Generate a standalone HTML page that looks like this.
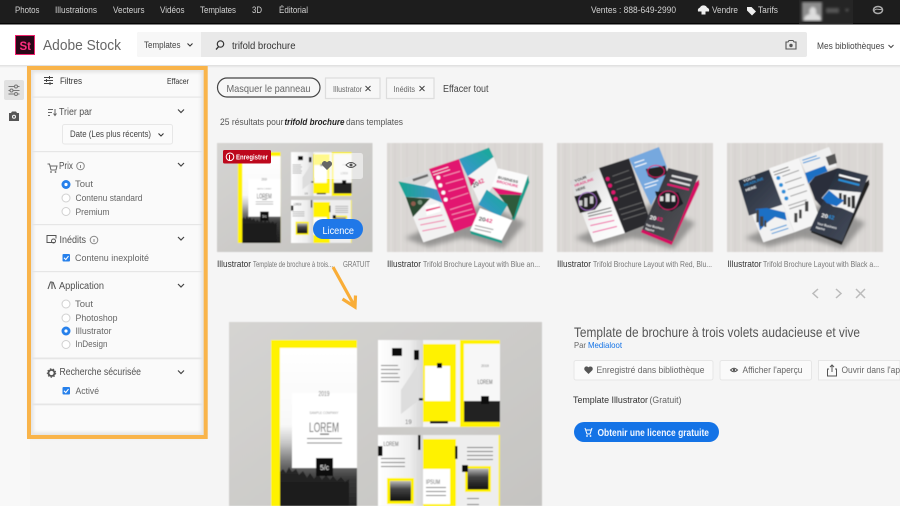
<!DOCTYPE html>
<html lang="fr"><head><meta charset="utf-8"><title>Adobe Stock</title>
<style>
html,body{margin:0;padding:0;width:900px;height:506px;background:#f5f5f5;overflow:hidden}
svg{display:block}
#root{filter:blur(.3px)}
text{font-family:"Liberation Sans",sans-serif}
</style></head><body>
<svg id="root" xmlns="http://www.w3.org/2000/svg" width="900" height="506" viewBox="0 0 900 506">
<defs>
<linearGradient id="bgg" x1="0" y1="0" x2="1" y2="1"><stop offset="0" stop-color="#d5d4d2"/><stop offset="1" stop-color="#c4c3c0"/></linearGradient>
<linearGradient id="fog" x1="0" y1="0" x2="0" y2="1"><stop offset="0" stop-color="#fff"/><stop offset=".45" stop-color="#f8f8f8"/><stop offset=".55" stop-color="#c8c8c8"/><stop offset=".66" stop-color="#777"/><stop offset=".76" stop-color="#3a3a3a"/><stop offset="1" stop-color="#1c1c1c"/></linearGradient>
<linearGradient id="fog2" x1="0" y1="0" x2="0" y2="1"><stop offset="0" stop-color="#bbb"/><stop offset=".4" stop-color="#444"/><stop offset="1" stop-color="#111"/></linearGradient>
<linearGradient id="pg" x1="0" y1="0" x2="1" y2="0"><stop offset="0" stop-color="#fff"/><stop offset=".7" stop-color="#eee"/><stop offset="1" stop-color="#d5d5d5"/></linearGradient>
<linearGradient id="tb" x1="0" y1="0" x2="1" y2="0"><stop offset="0" stop-color="#16a68f"/><stop offset="1" stop-color="#4a8fd0"/></linearGradient>
<linearGradient id="tb2" x1="0" y1="1" x2="1" y2="0"><stop offset="0" stop-color="#3c93d6"/><stop offset="1" stop-color="#17ab94"/></linearGradient>
<linearGradient id="drk" x1="0" y1="0" x2="1" y2="1"><stop offset="0" stop-color="#2f3036"/><stop offset="1" stop-color="#55565c"/></linearGradient>
<linearGradient id="nv" x1="0" y1="0" x2="1" y2="1"><stop offset="0" stop-color="#1f2735"/><stop offset="1" stop-color="#4a5160"/></linearGradient>
<linearGradient id="wh" x1="0" y1="0" x2="1" y2="1"><stop offset="0" stop-color="#d0d0d0"/><stop offset=".6" stop-color="#f6f6f6"/><stop offset="1" stop-color="#fff"/></linearGradient>
<linearGradient id="hs" x1="0" y1="0" x2="0" y2="1"><stop offset="0" stop-color="#000" stop-opacity=".1"/><stop offset="1" stop-color="#000" stop-opacity="0"/></linearGradient>
<filter id="b1" x="-5%" y="-5%" width="110%" height="110%"><feGaussianBlur stdDeviation=".4"/></filter>
<filter id="b2" x="-5%" y="-5%" width="110%" height="110%"><feGaussianBlur stdDeviation="1.2"/></filter>
<filter id="b6" x="-20%" y="-20%" width="140%" height="140%"><feGaussianBlur stdDeviation="7"/></filter>
<filter id="b3" x="-30%" y="-30%" width="160%" height="160%"><feGaussianBlur stdDeviation="1.6"/></filter>
<g id="wood">
<rect x="6" y="0" width="468" height="327" fill="#dad7d4"/>
<g stroke="#c9c5c1" stroke-width="3" opacity=".3"><path d="M30 0V327M66 0V327M98 0V327M150 0V327M186 0V327M240 0V327M282 0V327M330 0V327M372 0V327M420 0V327M452 0V327"/></g>
<g stroke="#ece9e7" stroke-width="4" opacity=".35"><path d="M18 0V327M48 0V327M120 0V327M170 0V327M210 0V327M262 0V327M305 0V327M350 0V327M398 0V327M438 0V327"/></g>
<path d="M60 285 130 312 230 285 265 290 355 318 420 240 300 180Z" fill="#555" opacity=".5" filter="url(#b6)"/>
</g>
<g id="art">
<rect width="313" height="216" fill="url(#bgg)"/>
<rect x="42" y="18" width="86" height="180" fill="#fff200"/>
<rect x="51" y="26" width="77" height="172" fill="url(#fog)"/>
<path d="M51 150l3-3 3 4 3-6 3 5 4-3 3 6 4-4 4 7 3-5 4 6 4-5 4 6 4-5 4 5 3-4 4 5 4-4 4 5 4-3V198H51Z" fill="#181818" opacity=".75"/>
<rect x="63" y="71" width="65" height="75" fill="#fff"/>
<rect x="87" y="136" width="17" height="18" fill="#0c0c0c"/>
<text x="95.5" y="148" text-anchor="middle" font-size="7" fill="#eee">5/c</text>
<text x="95" y="74" text-anchor="middle" font-size="7" fill="#777" textLength="11" lengthAdjust="spacingAndGlyphs">2019</text>
<text x="95" y="92" text-anchor="middle" font-size="3.5" fill="#999" textLength="29" lengthAdjust="spacingAndGlyphs">SAMPLE COMPANY</text>
<text x="95" y="110" text-anchor="middle" font-size="14" fill="#666" textLength="30" lengthAdjust="spacingAndGlyphs">LOREM</text>
<rect x="91" y="111.500" width="9" height="1.200" fill="#555"/>
<rect x="78" y="116" width="35" height="1" fill="#777"/><rect x="78" y="120.500" width="35" height="1" fill="#777"/>
<rect x="149" y="18" width="45" height="87" fill="url(#pg)"/>
<rect x="194" y="18" width="37" height="87" fill="#f4f4f4"/>
<rect x="194" y="22" width="33" height="78" fill="#fff200"/>
<rect x="196" y="44" width="25" height="35" fill="#fff"/>
<rect x="208" y="41" width="5" height="5" fill="#111"/>
<rect x="201" y="99" width="18" height="2.500" fill="#111"/>
<rect x="176" y="76" width="18" height="2.500" fill="#111"/>
<rect x="185" y="28" width="5" height="10" fill="#111"/>
<rect x="163" y="26" width="10" height="8" fill="#111"/>
<g fill="#777"><rect x="152" y="43" width="17" height="1"/><rect x="152" y="47" width="19" height="1"/><rect x="152" y="51" width="17" height="1"/><rect x="152" y="55" width="19" height="1"/><rect x="152" y="59" width="18" height="1"/></g>
<path d="M172 68 188 44 190 78 172 92Z" fill="#ddd"/>
<text x="176" y="102" font-size="6" fill="#666">19</text>
<rect x="231" y="18" width="40" height="87" fill="#fff200"/>
<rect x="235" y="22" width="36" height="78" fill="#f7f7f7"/>
<rect x="235" y="79" width="36" height="21" fill="#222"/>
<rect x="252" y="74" width="8" height="8" fill="#111"/>
<text x="256" y="62" text-anchor="middle" font-size="6.500" fill="#555" textLength="15" lengthAdjust="spacingAndGlyphs">LOREM</text>
<text x="256" y="45" text-anchor="middle" font-size="3.500" fill="#777">2019</text>
<rect x="149" y="113" width="122" height="85" fill="#eee"/>
<rect x="149" y="113" width="45" height="85" fill="url(#pg)"/>
<rect x="194" y="117" width="33" height="81" fill="#fff200"/>
<rect x="194" y="147" width="27" height="35" fill="#fff"/>
<rect x="226" y="124" width="2.500" height="13" fill="#111"/>
<rect x="189" y="113" width="2.500" height="15" fill="#111"/>
<rect x="149" y="124" width="4.500" height="10" fill="#111"/>
<text x="162" y="124" text-anchor="middle" font-size="6.500" fill="#555" textLength="15" lengthAdjust="spacingAndGlyphs">LOREM</text>
<text x="204" y="162" text-anchor="middle" font-size="6.500" fill="#555" textLength="14" lengthAdjust="spacingAndGlyphs">IPSUM</text>
<g fill="#777"><rect x="152" y="136" width="24" height="1"/><rect x="152" y="140" width="24" height="1"/><rect x="152" y="144" width="24" height="1"/><rect x="197" y="165" width="20" height="1"/><rect x="197" y="169" width="20" height="1"/><rect x="197" y="173" width="20" height="1"/><rect x="238" y="125" width="26" height="1"/><rect x="238" y="129" width="26" height="1"/><rect x="238" y="133" width="26" height="1"/><rect x="238" y="137" width="26" height="1"/><rect x="238" y="176" width="12" height="1"/><rect x="238" y="182" width="12" height="1"/></g>
<rect x="158" y="156" width="27" height="26" fill="#fff200"/>
<rect x="161" y="159" width="21" height="20" fill="url(#fog2)"/>
<rect x="236" y="144" width="26" height="26" fill="#fff200"/>
<rect x="238.500" y="146.500" width="21" height="21" fill="url(#fog2)"/>
<rect x="233" y="143" width="6" height="7" fill="#111"/>
<rect x="269.500" y="113" width="1.500" height="85" fill="#fff200"/>
</g>
</defs>

<!-- page -->
<rect width="900" height="506" fill="#f5f5f5"/>
<rect x="0" y="65" width="30" height="441" fill="#f8f8f8"/>
<rect x="0" y="65" width="900" height="3" fill="url(#hs)"/>

<!-- top bar -->
<rect width="900" height="24" fill="#1d1d1d"/>
<rect y="23" width="900" height="1.500" fill="#050505"/>
<g font-size="9" fill="#d2d2d2">
<text x="15" y="13" textLength="24.500" lengthAdjust="spacingAndGlyphs">Photos</text>
<text x="55" y="13" textLength="42" lengthAdjust="spacingAndGlyphs">Illustrations</text>
<text x="113" y="13" textLength="31.500" lengthAdjust="spacingAndGlyphs">Vecteurs</text>
<text x="160" y="13" textLength="24.500" lengthAdjust="spacingAndGlyphs">Vidéos</text>
<text x="200" y="13" textLength="36" lengthAdjust="spacingAndGlyphs">Templates</text>
<text x="252" y="13" textLength="10" lengthAdjust="spacingAndGlyphs">3D</text>
<text x="279" y="13" textLength="29" lengthAdjust="spacingAndGlyphs">Éditorial</text>
<text x="591" y="13" textLength="85" lengthAdjust="spacingAndGlyphs">Ventes : 888-649-2990</text>
<text x="712" y="13" textLength="26" lengthAdjust="spacingAndGlyphs">Vendre</text>
<text x="758" y="13" textLength="20" lengthAdjust="spacingAndGlyphs">Tarifs</text>
</g>
<path d="M698 11.500a3 3 0 0 1 2-4 4 4 0 0 1 7 0 3 3 0 0 1 2 4h-3.500v3h-4v-3Z" fill="#eee"/>
<path d="M747 7h4.500l4.500 4.500-4 4-5-5Z" fill="#eee"/>
<rect x="799" y="0" width="54" height="24" fill="#252525"/>
<g filter="url(#b2)">
<rect x="802" y="2" width="20" height="19" fill="#8d8d8d"/>
<path d="M804 21q0-6 6-7-2-4 2-7 5 0 4 7 5 1 5 7Z" fill="#ddd"/>
<rect x="826" y="8" width="13" height="5" fill="#555"/>
<path d="M845 9h4l-2 3Z" fill="#666"/>
</g>
<ellipse cx="878" cy="10" rx="4.500" ry="3.500" fill="none" stroke="#aaa" stroke-width="1.500"/>
<path d="M874 11c2-4 6 0 8-2" fill="none" stroke="#aaa"/>

<!-- header -->
<rect y="24.500" width="900" height="40.500" fill="#fff"/>
<rect x="15" y="35" width="20" height="20" fill="#2a0818"/>
<rect x="15.500" y="35.500" width="19" height="19" fill="none" stroke="#f0246e"/>
<text x="19.500" y="50" font-size="12" font-weight="bold" fill="#ff2f7f" textLength="11.500" lengthAdjust="spacingAndGlyphs">St</text>
<text x="43" y="50" font-size="15" fill="#666" textLength="78" lengthAdjust="spacingAndGlyphs">Adobe Stock</text>
<rect x="137" y="32" width="670" height="25" rx="2" fill="#e9e9e9"/>
<path d="M139 32h62v25h-62a2 2 0 0 1-2-2v-21a2 2 0 0 1 2-2Z" fill="#f7f7f7"/>
<text x="144" y="48" font-size="9" fill="#444" textLength="36.500" lengthAdjust="spacingAndGlyphs">Templates</text>
<path d="M187.500 43.500 190 46l2.500-2.500" fill="none" stroke="#333" stroke-width="1.100"/>
<circle cx="220.500" cy="44" r="3.200" fill="none" stroke="#333" stroke-width="1.200"/><path d="M218.500 46.800 216 49.500" stroke="#333" stroke-width="1.300"/>
<text x="232" y="49" font-size="10" fill="#333" textLength="63.500" lengthAdjust="spacingAndGlyphs">trifold brochure</text>
<path d="M786 42h2l1-1.500h4l1 1.500h2v7h-10Z" fill="none" stroke="#555" stroke-width="1.100"/><circle cx="791" cy="45.500" r="1.700" fill="#555"/>
<text x="817" y="49" font-size="9.500" fill="#444" textLength="67.500" lengthAdjust="spacingAndGlyphs">Mes bibliothèques</text>
<path d="M888.500 45 891 47.500l2.500-2.500" fill="none" stroke="#444"/>

<!-- left rail -->
<rect x="4" y="80" width="20" height="20" rx="2" fill="#e1e1e1"/>
<g fill="none" stroke="#777"><path d="M8.500 86.500h11M8.500 90.500h11M8.500 94h11"/><circle cx="16" cy="86.500" r="1.500" fill="#e1e1e1"/><circle cx="11.500" cy="90.500" r="1.500" fill="#e1e1e1"/><circle cx="16" cy="94" r="1.500" fill="#e1e1e1"/></g>
<path d="M9 113h2l1-1.500h4l1 1.500h2v8h-10Z" fill="#555"/><circle cx="14" cy="116.800" r="2" fill="#f8f8f8"/><circle cx="14" cy="116.800" r="1" fill="#555"/>

<!-- filter panel -->
<rect x="31" y="70" width="172.500" height="365" fill="#fafafa"/>
<rect x="31" y="70" width="172.500" height="365" fill="none" stroke="#bbb" stroke-width="5" opacity=".35" filter="url(#b3)"/>
<g fill="#e6e6e6"><rect x="31" y="96.500" width="172.500" height="1.200"/><rect x="31" y="151" width="172.500" height="1.200"/><rect x="31" y="224" width="172.500" height="1.200"/><rect x="31" y="271" width="172.500" height="1.200"/><rect x="31" y="357.500" width="172.500" height="1.800"/><rect x="31" y="403.500" width="172.500" height="1.800"/></g>
<g fill="none" stroke="#444"><path d="M44 77.500h9M44 80.500h9M44 83.500h9"/><path d="M49.500 76v3M46.500 79v3M50 82v3"/></g>
<g font-size="9" fill="#333">
<text x="60" y="84" textLength="22" lengthAdjust="spacingAndGlyphs">Filtres</text>
<text x="167" y="84" font-size="8.500" textLength="22" lengthAdjust="spacingAndGlyphs">Effacer</text>
</g>
<g font-size="10" fill="#505050">
<text x="59" y="115" textLength="33" lengthAdjust="spacingAndGlyphs">Trier par</text>
<text x="59" y="169" textLength="14" lengthAdjust="spacingAndGlyphs">Prix</text>
<text x="59.500" y="243" textLength="26.500" lengthAdjust="spacingAndGlyphs">Inédits</text>
<text x="59" y="289" textLength="45" lengthAdjust="spacingAndGlyphs">Application</text>
<text x="59.500" y="375" textLength="81.500" lengthAdjust="spacingAndGlyphs">Recherche sécurisée</text>
</g>
<g fill="none" stroke="#444" stroke-width="1.200">
<path d="M178 109.500l3 3 3-3M178 163l3 3 3-3M178 237l3 3 3-3M178 284l3 3 3-3M178 370.500l3 3 3-3"/>
</g>
<g fill="none" stroke="#666"><path d="M48 109.500h5M48 112.500h4M48 115.500h2M55 109v6M53.500 113.500l1.500 2 1.500-2"/></g>
<path d="M47.500 164h2l1.500 6h5l1-4h-7" fill="none" stroke="#666"/><circle cx="51" cy="172" r=".9" fill="#666"/><circle cx="55.500" cy="172" r=".9" fill="#666"/>
<g fill="none" stroke="#888"><circle cx="80.500" cy="166" r="3.800"/><circle cx="94" cy="240" r="3.800"/></g>
<g fill="#888"><rect x="80" y="165" width="1" height="3"/><rect x="93.500" y="239" width="1" height="3"/></g>
<path d="M55 242.500h-8v-7h9v3" fill="none" stroke="#555"/><circle cx="53.500" cy="241" r="2" fill="none" stroke="#555"/>
<path d="M48 289l2.500-7h1.500v7M55.500 289l-2.500-7" fill="none" stroke="#555" stroke-width="1.100"/>
<circle cx="51.500" cy="373" r="3" fill="none" stroke="#555" stroke-width="1.800"/><circle cx="51.500" cy="373" r="4.200" fill="none" stroke="#555" stroke-width="1" stroke-dasharray="1.500 1.500"/>

<rect x="62.500" y="124.500" width="110" height="19.500" rx="2" fill="#fbfbfb" stroke="#e7e7e7"/>
<text x="70" y="137" font-size="9" fill="#444" textLength="81" lengthAdjust="spacingAndGlyphs">Date (Les plus récents)</text>
<path d="M158.500 133.500l2.500 2.500 2.500-2.500" fill="none" stroke="#333" stroke-width="1.100"/>

<g fill="#fff" stroke="#d0d0d0">
<circle cx="66" cy="198" r="4"/><circle cx="66" cy="211.500" r="4"/><circle cx="66" cy="304" r="4"/><circle cx="66" cy="318" r="4"/><circle cx="66" cy="344.500" r="4"/>
</g>
<g fill="#2680eb"><circle cx="66" cy="184.500" r="4.500"/><circle cx="66" cy="331" r="4.500"/></g>
<g fill="#fff"><circle cx="66" cy="184.500" r="1.600"/><circle cx="66" cy="331" r="1.600"/></g>
<g font-size="9" fill="#666">
<text x="75" y="187" textLength="18" lengthAdjust="spacingAndGlyphs">Tout</text>
<text x="75.500" y="201" textLength="67" lengthAdjust="spacingAndGlyphs">Contenu standard</text>
<text x="75.500" y="215" textLength="34" lengthAdjust="spacingAndGlyphs">Premium</text>
<text x="75" y="261" textLength="74" lengthAdjust="spacingAndGlyphs">Contenu inexploité</text>
<text x="75" y="307" textLength="18" lengthAdjust="spacingAndGlyphs">Tout</text>
<text x="75.500" y="321" textLength="42" lengthAdjust="spacingAndGlyphs">Photoshop</text>
<text x="75.500" y="334" textLength="36" lengthAdjust="spacingAndGlyphs">Illustrator</text>
<text x="75.500" y="347" textLength="32" lengthAdjust="spacingAndGlyphs">InDesign</text>
<text x="75.500" y="394" textLength="23.500" lengthAdjust="spacingAndGlyphs">Activé</text>
</g>
<rect x="62.500" y="254" width="7.500" height="7.500" rx="1" fill="#2680eb"/><path d="M64 257.800l1.800 1.800 2.700-3.500" fill="none" stroke="#fff" stroke-width="1.100"/>
<rect x="62.500" y="387" width="7.500" height="7.500" rx="1" fill="#2680eb"/><path d="M64 390.800l1.800 1.800 2.700-3.500" fill="none" stroke="#fff" stroke-width="1.100"/>
<rect x="29" y="68" width="176.700" height="369" fill="none" stroke="#f9b44a" stroke-width="4"/>

<!-- toolbar -->
<rect x="217.500" y="78" width="102.500" height="19" rx="9.500" fill="#f7f7f7" stroke="#444" stroke-width="1.200"/>
<text x="226.500" y="92" font-size="10.500" fill="#666" textLength="84" lengthAdjust="spacingAndGlyphs">Masquer le panneau</text>
<rect x="325.500" y="78" width="54.500" height="20.500" fill="#f7f7f7" stroke="#ddd" stroke-width="1.200"/>
<rect x="386.500" y="78" width="47.500" height="20.500" fill="#f7f7f7" stroke="#ddd" stroke-width="1.200"/>
<text x="333" y="92" font-size="8" fill="#666" textLength="29" lengthAdjust="spacingAndGlyphs">Illustrator</text>
<text x="393.500" y="92" font-size="8" fill="#666" textLength="21.500" lengthAdjust="spacingAndGlyphs">Inédits</text>
<path d="M365.500 86l5 5M370.500 86l-5 5M419.500 86l5 5M424.500 86l-5 5" stroke="#444" fill="none"/>
<text x="443" y="92" font-size="10" fill="#444" textLength="45.500" lengthAdjust="spacingAndGlyphs">Effacer tout</text>
<text x="220" y="125" font-size="9.500" fill="#555" textLength="63.500" lengthAdjust="spacingAndGlyphs">25 résultats pour</text>
<text x="284.500" y="125" font-size="9.500" fill="#222" font-weight="bold" font-style="italic" textLength="60" lengthAdjust="spacingAndGlyphs">trifold brochure</text>
<text x="346" y="125" font-size="9.500" fill="#555" textLength="57" lengthAdjust="spacingAndGlyphs">dans templates</text>

<!-- thumb 1 -->
<g filter="url(#b1)">
<svg x="217" y="143" width="155.500" height="109" viewBox="0 0 313 216" preserveAspectRatio="none"><use href="#art"/></svg>
</g>
<rect x="223" y="150" width="48" height="13.500" rx="1.500" fill="#bd081c"/>
<circle cx="230" cy="156.800" r="3.800" fill="none" stroke="#fff" stroke-width="1"/><path d="M229.500 155v5" stroke="#fff"/>
<text x="236" y="159.500" font-size="7.500" fill="#fff" font-weight="bold" textLength="32" lengthAdjust="spacingAndGlyphs">Enregistrer</text>
<rect x="314" y="153" width="49" height="26" rx="2.500" fill="#fff" opacity=".55"/>
<path d="M327 170l-4.500-4.500a2.700 2.700 0 0 1 4.500-3.300 2.700 2.700 0 0 1 4.500 3.300Z" fill="#666"/>
<path d="M346 165q5-5 10 0q-5 5-10 0Z" fill="none" stroke="#555"/><circle cx="351" cy="165" r="1.500" fill="#555"/>
<rect x="313" y="219" width="50" height="20" rx="10" fill="#1f78e8"/>
<text x="322.500" y="234" font-size="10.500" fill="#fff" textLength="31.500" lengthAdjust="spacingAndGlyphs">Licence</text>

<!-- thumb 2 -->
<g filter="url(#b1)">
<svg x="385" y="143" width="160" height="110" viewBox="0 0 480 330">
<use href="#wood"/>
<path d="M40 112 132 82 208 268 115 298Z" fill="#f2f2f2"/>
<path d="M40 112 132 82 142 108 118 128 42 116Z" fill="#d8d8d8"/>
<path d="M82 108 128 93 130 100 85 115Z" fill="#666"/>
<path d="M40 115 120 130 165 142 178 182 135 165 62 162Z" fill="url(#tb)"/>
<path d="M62 162 135 167 84 222Z" fill="#2b4a32"/><circle cx="85" cy="182" r="7" fill="#8e5b4e"/><circle cx="105" cy="178" r="7" fill="#74907a"/>
<path d="M120 190 160 180 168 205 125 218Z" fill="#fff"/><path d="M122 200 165 190 166 194 124 205Z" fill="#e8156f"/>
<g stroke="#f07aa8" stroke-width="3"><path d="M100 230 172 216M106 246 178 232M112 264 184 250"/></g>
<path d="M132 78 222 48 283 240 208 268Z" fill="#e2166f"/>
<g fill="#fff"><circle cx="160" cy="104" r="6"/><circle cx="166" cy="127" r="6"/><circle cx="175" cy="149" r="6"/><circle cx="182" cy="170" r="6"/></g>
<g stroke="#f59bc0" stroke-width="2.500"><path d="M175 100 225 85M182 122 235 107M190 145 242 130M196 168 250 150M195 200 258 180M200 215 262 198M205 230 268 212"/></g>
<path d="M142 88 190 72M145 96 195 80" stroke="#fff" stroke-width="2"/>
<path d="M222 48 312 14 326 42 248 100Z" fill="url(#tb2)"/>
<path d="M248 100 326 42 345 95 287 188Z" fill="#f4f4f4"/>
<path d="M248 100 272 110 258 130Z" fill="#e2166f"/>
<text x="266" y="135" font-size="20" font-weight="bold" fill="#333" transform="rotate(-28 266 135)" textLength="38" lengthAdjust="spacingAndGlyphs">20<tspan fill="#e2166f">42</tspan></text>
<path d="M255 263 350 292 352 301 258 273Z" fill="#1a9e8c"/>
<path d="M429 97 433 118 388 232 380 226Z" fill="#1a9e8c"/>
<path d="M340 76 429 97 411 150 320 130Z" fill="#fbfbfb"/>
<path d="M322 133 411 150 407 156 340 154Z" fill="#e2166f"/>
<g font-size="11" font-weight="bold"><text x="338" y="106" fill="#333" transform="rotate(14 338 106)" textLength="62" lengthAdjust="spacingAndGlyphs">BUSINESS</text><text x="334" y="118" fill="#e2166f" transform="rotate(14 334 118)" textLength="66" lengthAdjust="spacingAndGlyphs">BROCHURE</text></g>
<path d="M340 154 407 156 385 228 368 190Z" fill="#2f5a3a"/>
<path d="M305 140 368 185 345 222 280 185Z" fill="url(#tb2)"/>
<path d="M255 263 285 195 382 232 350 292Z" fill="#fff"/>
<text x="280" y="232" font-size="17" font-weight="bold" fill="#333" transform="rotate(12 280 232)" textLength="42" lengthAdjust="spacingAndGlyphs">20<tspan fill="#e2166f">42</tspan></text>
<path d="M270 247 325 260M268 257 318 268" stroke="#999" stroke-width="3"/>
</svg>
</g>

<!-- thumb 3 -->
<g filter="url(#b1)">
<svg x="555" y="143" width="160" height="110" viewBox="0 0 480 330">
<use href="#wood"/>
<path d="M44 115 132 78 210 270 115 298Z" fill="url(#wh)"/>
<text x="60" y="118" font-size="11" font-weight="bold" fill="#222" transform="rotate(-20 60 118)" textLength="38" lengthAdjust="spacingAndGlyphs">YOUR</text>
<text x="60" y="132" font-size="11" font-weight="bold" fill="#e2166f" transform="rotate(-20 60 132)" textLength="60" lengthAdjust="spacingAndGlyphs">HEADLINE</text>
<text x="64" y="146" font-size="11" font-weight="bold" fill="#222" transform="rotate(-20 64 146)" textLength="30" lengthAdjust="spacingAndGlyphs">HERE</text>
<path d="M58 160 125 142 140 175 120 200 75 210Z" fill="#222"/>
<circle cx="98" cy="175" r="27" fill="none" stroke="#a26cc7" stroke-width="2.500"/>
<g fill="#ccc"><rect x="72" y="172" width="10" height="16"/><rect x="88" y="165" width="9" height="26"/><rect x="105" y="160" width="10" height="22"/></g>
<g stroke="#ef5aa0" stroke-width="3"><path d="M100 230 172 216M106 248 178 232M113 268 186 250"/></g>
<path d="M98 212 168 194M100 220 170 204" stroke="#444" stroke-width="2.500"/>
<path d="M132 75 222 46 288 240 210 270Z" fill="#29292d"/>
<g fill="#e2166f"><circle cx="158" cy="108" r="6"/><circle cx="165" cy="128" r="6"/><circle cx="175" cy="148" r="6"/><circle cx="182" cy="168" r="6"/></g>
<g stroke="#666" stroke-width="3"><path d="M172 100 222 82M178 120 230 102M185 140 238 122M194 162 246 143M192 200 262 178M198 215 268 193M204 230 274 208"/></g>
<path d="M222 46 312 12 335 70 330 110 288 188Z" fill="#76a8de"/>
<path d="M272 78 330 68 338 92 300 110 280 100Z" fill="#222"/>
<ellipse cx="303" cy="85" rx="25" ry="18" fill="none" stroke="#e2166f" stroke-width="2.500"/>
<g stroke="#fff" stroke-width="3"><path d="M238 60 268 50M240 72 275 60M268 125 310 112M270 135 305 124"/></g>
<path d="M432 110 433 125 350 306 258 268 262 258Z" fill="#d70f63"/>
<path d="M340 75 430 98 352 296 262 260Z" fill="url(#drk)"/>
<path d="M350 98 410 112M345 112 405 127" stroke="#fff" stroke-width="6" opacity=".85"/>
<path d="M337 124 402 140" stroke="#e2166f" stroke-width="6"/>
<path d="M300 145 370 148 385 182 350 205 315 195Z" fill="#1f1f23"/>
<ellipse cx="340" cy="172" rx="30" ry="28" fill="none" stroke="#e2166f" stroke-width="2.500"/>
<g fill="#ddd"><rect x="315" y="160" width="10" height="14"/><rect x="332" y="152" width="12" height="24"/><rect x="350" y="158" width="10" height="18"/></g>
<text x="283" y="228" font-size="17" font-weight="bold" fill="#fff" transform="rotate(12 283 228)" textLength="40" lengthAdjust="spacingAndGlyphs">20<tspan fill="#e2166f">42</tspan></text>
<text x="272" y="248" font-size="10" font-weight="bold" fill="#fff" transform="rotate(14 272 248)" textLength="56" lengthAdjust="spacingAndGlyphs">Your Business</text>
<text x="270" y="260" font-size="10" font-weight="bold" fill="#fff" transform="rotate(14 270 260)" textLength="28" lengthAdjust="spacingAndGlyphs">Name</text>
</svg>
</g>

<!-- thumb 4 -->
<g filter="url(#b1)">
<svg x="725" y="143" width="160" height="110" viewBox="0 0 480 330">
<use href="#wood"/>
<path d="M40 112 132 80 208 268 115 298Z" fill="#f2f2f2"/>
<path d="M40 112 132 80 172 185 72 218Z" fill="url(#nv)"/>
<text x="56" y="118" font-size="11" font-weight="bold" fill="#fff" transform="rotate(-20 56 118)" textLength="38" lengthAdjust="spacingAndGlyphs">YOUR</text>
<text x="58" y="131" font-size="11" font-weight="bold" fill="#2b8fd8" transform="rotate(-20 58 131)" textLength="62" lengthAdjust="spacingAndGlyphs">HEADLINE</text>
<text x="63" y="146" font-size="11" font-weight="bold" fill="#fff" transform="rotate(-20 63 146)" textLength="34" lengthAdjust="spacingAndGlyphs">HERE</text>
<path d="M92 198 125 195 180 208 185 232 150 222 125 240 105 262Z" fill="#1f6fc4"/>
<g fill="#444"><rect x="94" y="200" width="8" height="38"/><rect x="105" y="220" width="10" height="30"/><rect x="118" y="232" width="6" height="20"/></g>
<path d="M136 262 185 246M140 272 190 256" stroke="#2b8fd8" stroke-width="3"/>
<path d="M132 76 222 45 288 238 208 268Z" fill="#f5f5f5"/>
<g fill="#2b8fd8"><circle cx="160" cy="105" r="6"/><circle cx="168" cy="126" r="6"/><circle cx="176" cy="146" r="6"/><circle cx="184" cy="166" r="6"/></g>
<g stroke="#999" stroke-width="3"><path d="M172 100 222 82M180 120 230 103M188 140 238 124M196 160 246 143M190 188 245 170M193 198 248 180"/></g>
<path d="M145 88 190 72M148 96 195 80" stroke="#444" stroke-width="2"/>
<g fill="#444"><rect x="208" y="210" width="9" height="28"/><rect x="222" y="200" width="8" height="26"/><rect x="240" y="175" width="10" height="30"/></g>
<path d="M222 45 312 12 335 70 245 95Z" fill="#f0f0f0"/>
<path d="M302 42 330 32 336 60 312 68Z" fill="#555"/>
<path d="M232 52 275 38M234 60 285 44" stroke="#2b8fd8" stroke-width="3"/>
<path d="M240 90 300 68 308 85 270 100 250 122Z" fill="#1f6fc4"/>
<path d="M252 122 270 100 338 75 348 100 335 140 288 190 270 170Z" fill="#2a2f3a"/>
<path d="M432 110 433 125 350 306 258 268 262 258Z" fill="#222"/>
<path d="M340 75 430 98 352 296 254 262Z" fill="url(#nv)"/>
<path d="M342 96 405 112" stroke="#fff" stroke-width="6"/><path d="M340 110 403 126" stroke="#2b8fd8" stroke-width="6"/>
<path d="M312 140 408 148 385 210 350 195 325 190 290 165Z" fill="#f2f2f2"/>
<g fill="#333"><rect x="355" y="155" width="9" height="30"/><rect x="368" y="162" width="8" height="30"/><rect x="380" y="158" width="10" height="38"/><rect x="342" y="150" width="8" height="20"/></g>
<path d="M292 165 312 142 340 165 358 172 335 190 305 180Z" fill="#1f6fc4"/>
<text x="288" y="222" font-size="17" font-weight="bold" fill="#fff" transform="rotate(12 288 222)" textLength="40" lengthAdjust="spacingAndGlyphs">20<tspan fill="#2b8fd8">42</tspan></text>
<text x="276" y="244" font-size="10" font-weight="bold" fill="#fff" transform="rotate(14 276 244)" textLength="60" lengthAdjust="spacingAndGlyphs">Your Business</text>
<text x="272" y="256" font-size="10" font-weight="bold" fill="#fff" transform="rotate(14 272 256)" textLength="28" lengthAdjust="spacingAndGlyphs">Name</text>
</svg>
</g>

<!-- captions -->
<g font-size="9">
<g fill="#333">
<text x="217" y="267" textLength="34" lengthAdjust="spacingAndGlyphs">Illustrator</text>
<text x="387" y="267" textLength="34" lengthAdjust="spacingAndGlyphs">Illustrator</text>
<text x="557" y="267" textLength="34" lengthAdjust="spacingAndGlyphs">Illustrator</text>
<text x="727.500" y="267" textLength="34" lengthAdjust="spacingAndGlyphs">Illustrator</text>
</g>
<g fill="#777" font-size="8.500">
<text x="253" y="267" textLength="80" lengthAdjust="spacingAndGlyphs">Template de brochure à trois...</text>
<text x="343" y="267" textLength="27" lengthAdjust="spacingAndGlyphs">GRATUIT</text>
<text x="423" y="267" textLength="117" lengthAdjust="spacingAndGlyphs">Trifold Brochure Layout with Blue an...</text>
<text x="593" y="267" textLength="119" lengthAdjust="spacingAndGlyphs">Trifold Brochure Layout with Red, Blu...</text>
<text x="763" y="267" textLength="116" lengthAdjust="spacingAndGlyphs">Trifold Brochure Layout with Black a...</text>
</g>
</g>
<path d="M818 289l-5 4.500 5 4.500M836 289l5 4.500-5 4.500" fill="none" stroke="#bbb" stroke-width="1.500"/>
<path d="M856 289l9 9M865 289l-9 9" fill="none" stroke="#bbb" stroke-width="1.500"/>

<!-- orange arrow -->
<path d="M333 267 354 305M342.500 299 355 307 355.500 295.500" fill="none" stroke="#f9ad37" stroke-width="3.200"/>

<!-- big preview -->
<g filter="url(#b1)">
<svg x="229" y="322" width="313" height="184" viewBox="0 0 313 184"><use href="#art"/></svg>
</g>

<!-- detail -->
<text x="574" y="337" font-size="14" fill="#555" textLength="286" lengthAdjust="spacingAndGlyphs">Template de brochure à trois volets audacieuse et vive</text>
<text x="574" y="348" font-size="8.500" fill="#666" textLength="12" lengthAdjust="spacingAndGlyphs">Par</text>
<text x="588" y="348" font-size="8.500" fill="#1473e6" textLength="34" lengthAdjust="spacingAndGlyphs">Medialoot</text>
<g fill="#fafafa" stroke="#e6e6e6"><rect x="574" y="360.500" width="139" height="19.500" rx="2"/><rect x="720" y="360.500" width="91.500" height="19.500" rx="2"/><rect x="818.500" y="360.500" width="81.500" height="19.500"/></g>
<path d="M588.500 374l-3.800-3.800a2.300 2.300 0 0 1 3.800-2.800 2.300 2.300 0 0 1 3.800 2.800Z" fill="#555"/>
<path d="M730.500 370q3.500-3.500 7 0q-3.500 3.500-7 0Z" fill="none" stroke="#555"/><circle cx="734" cy="370" r="1.200" fill="#555"/>
<path d="M829 369h-1.500v7h9v-7H835M832 372v-7M830 367l2-2 2 2" fill="none" stroke="#555"/>
<g font-size="9" fill="#666">
<text x="596.500" y="373" textLength="108" lengthAdjust="spacingAndGlyphs">Enregistré dans bibliothèque</text>
<text x="742.500" y="373" textLength="60" lengthAdjust="spacingAndGlyphs">Afficher l'aperçu</text>
<text x="841.500" y="373" textLength="58.500" lengthAdjust="spacingAndGlyphs">Ouvrir dans l'ap</text>
</g>
<text x="573" y="403" font-size="9.500" fill="#333" textLength="75" lengthAdjust="spacingAndGlyphs">Template Illustrator</text>
<text x="649.500" y="403" font-size="9.500" fill="#666" textLength="32" lengthAdjust="spacingAndGlyphs">(Gratuit)</text>
<rect x="574" y="422" width="145" height="20" rx="10" fill="#1473e6"/>
<path d="M585 428l2 6h3l2-6M586 430h5" fill="none" stroke="#fff"/><circle cx="587" cy="436" r=".9" fill="#fff"/><circle cx="590.500" cy="436" r=".9" fill="#fff"/>
<text x="597.500" y="436" font-size="10" font-weight="bold" fill="#f2f7ff" textLength="111.500" lengthAdjust="spacingAndGlyphs">Obtenir une licence gratuite</text>
</svg>
</body></html>
